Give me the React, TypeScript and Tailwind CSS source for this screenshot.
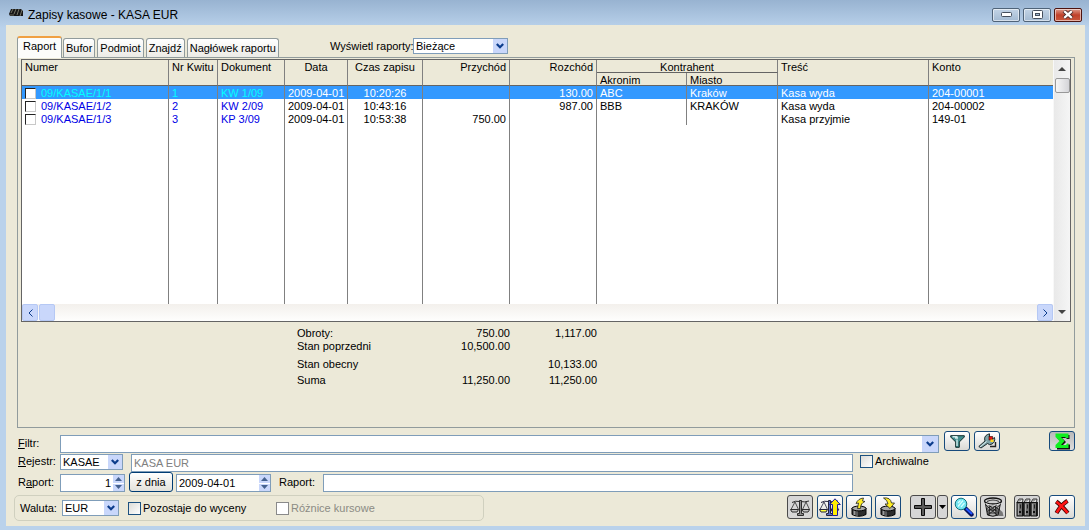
import React from "react";
import type { ReactNode } from "react";

type Entry = {
  numer: string;
  kwit: string;
  dokument: string;
  data: string;
  czas: string;
  przychod: string;
  rozchod: string;
  akronim: string;
  miasto: string;
  tresc: string;
  konto: string;
};

const entries: Entry[] = [
  { numer: "09/KASAE/1/1", kwit: "1", dokument: "KW 1/09", data: "2009-04-01", czas: "10:20:26", przychod: "", rozchod: "130.00", akronim: "ABC", miasto: "Kraków", tresc: "Kasa wyda", konto: "204-00001" },
  { numer: "09/KASAE/1/2", kwit: "2", dokument: "KW 2/09", data: "2009-04-01", czas: "10:43:16", przychod: "", rozchod: "987.00", akronim: "BBB", miasto: "KRAKÓW", tresc: "Kasa wyda", konto: "204-00002" },
  { numer: "09/KASAE/1/3", kwit: "3", dokument: "KP 3/09", data: "2009-04-01", czas: "10:53:38", przychod: "750.00", rozchod: "", akronim: "", miasto: "", tresc: "Kasa przyjmie", konto: "149-01" },
];

const tabs = ["Bufor", "Podmiot", "Znajdź", "Nagłówek raportu"];

function Chevron() {
  return (
    <svg width="8" height="6" viewBox="0 0 8 6" aria-hidden="true">
      <path d="M0.8 1 L4 4.2 L7.2 1" fill="none" stroke="#0b3c8c" strokeWidth="2.2" />
    </svg>
  );
}

function Combo({ id, label, value, className, arrow = "w-3.5" }: { id: string; label?: string; value: string; className: string; arrow?: string }) {
  return (
    <span className={`grid border border-[#7f9db9] bg-white ${className}`}>
      <select id={id} aria-label={label} className="col-start-1 row-start-1 min-w-0 appearance-none bg-white pl-0.5 leading-[13px] outline-none">
        <option>{value}</option>
      </select>
      <span className={`pointer-events-none col-start-1 row-start-1 flex items-center justify-center justify-self-end bg-[#c9d7fb] ${arrow}`}>
        <Chevron />
      </span>
    </span>
  );
}

function Spinner({ id, label, value, className, align }: { id: string; label?: string; value: string; className: string; align: string }) {
  return (
    <span className={`flex h-[18px] border border-[#7f9db9] bg-white ${className}`}>
      <input id={id} aria-label={label} defaultValue={value} className={`w-full min-w-0 flex-1 px-0.5 outline-none ${align}`} />
      <span className="flex w-[11px] flex-col gap-px">
        <button aria-label="Zwiększ" className="flex flex-1 items-center justify-center bg-[#c9d7fb]">
          <svg width="7" height="4" viewBox="0 0 7 4"><path d="M0 4L3.5 0L7 4Z" fill="#44618f" /></svg>
        </button>
        <button aria-label="Zmniejsz" className="flex flex-1 items-center justify-center bg-[#c9d7fb]">
          <svg width="7" height="4" viewBox="0 0 7 4"><path d="M0 0L3.5 4L7 0Z" fill="#44618f" /></svg>
        </button>
      </span>
    </span>
  );
}

function ToolButton({ label, look = "normal", size, children }: { label: string; look?: "normal" | "off" | "pressed"; size: string; children: ReactNode }) {
  const looks = {
    normal: "border-[#174a7c] bg-linear-to-b from-white to-[#dad9d5]",
    off: "border-[#4b4b4b] bg-[#d6d6d6]",
    pressed: "border-[#174a7c] bg-linear-to-b from-[#b9b9b9] to-[#dedede]",
  };
  return (
    <button aria-label={label} className={`flex shrink-0 items-center justify-center rounded-[3px] border ${looks[look]} ${size}`}>
      {children}
    </button>
  );
}

function ScalesShape({ pan, line, post }: { pan: string; line: string; post: string }) {
  return (
    <g fill="none" stroke={line} strokeWidth="1">
      <path d="M2 4.5Q5 2.500 10 3.500Q15 4.500 19 3" />
      <path d="M5 4L1 11.500M5 4L8.500 11.500M16 4L12.500 11.500M16 4L19.500 11.500" strokeWidth="0.8" />
      <path d="M0.500 11.500H8.500L7 14H2Z" fill={pan} />
      <path d="M12 11.500H19.700L18 14H13.500Z" fill={pan} />
      <path d="M9.500 2.500H11.500V15.500H13.500V17.500H7.500V15.500H9.500Z" fill={post} />
    </g>
  );
}

function Scales() {
  return <svg width="20" height="19" viewBox="0 0 20 19"><ScalesShape pan="#c4c4c4" line="#2b2b2b" post="#8d8d8d" /></svg>;
}

function ScalesUp() {
  return (
    <svg width="22" height="19" viewBox="0 0 22 19">
      <ScalesShape pan="#ffff3a" line="#22223c" post="#5a6fc4" />
      <path d="M16 0.8L21.300 6.500H18.500V17.500H13.500V6.500H10.700Z" fill="#ffef00" stroke="#1b1b9b" />
    </svg>
  );
}

function Drum({ out }: { out: boolean }) {
  return (
    <svg width="18" height="20" viewBox="0 0 18 20">
      <path d="M2 11V17.500Q9 21 16 17.500V11Z" fill="#2c2c2c" stroke="#000" />
      <path d="M4.500 13V18" stroke="#9a9a9a" strokeWidth="2" />
      <path d="M7 13.500V19" stroke="#6a6a6a" strokeWidth="1.500" />
      <ellipse cx="9" cy="11.500" rx="7" ry="2.400" fill="#a8a8a8" stroke="#000" />
      {out ? (
        <path d="M7.500 11.5L8.500 6L6 6.500Q8 1.500 13.500 1L12.500 4L15 4.500Q10.500 6 10.500 11.500Z" fill="#ffed22" stroke="#222" strokeWidth="0.8" />
      ) : (
        <path d="M4.500 1Q11.500 0 12.500 6H15.500L11 11.500L6 7H9Q8.500 3 4.500 1Z" fill="#ffed22" stroke="#222" strokeWidth="0.8" />
      )}
    </svg>
  );
}

function Plus() {
  return <svg width="18" height="18" viewBox="0 0 18 18"><path d="M7.500 0.500H10.500V7.500H17.500V10.500H10.500V17.500H7.500V10.500H0.500V7.500H7.500Z" fill="#5a5a5a" stroke="#0a0a0a" /></svg>;
}

function Magnifier() {
  return (
    <svg width="20" height="20" viewBox="0 0 20 20">
      <path d="M11.500 11.500L17.500 17.500" stroke="#061260" strokeWidth="4.400" strokeLinecap="round" />
      <path d="M12 11.500L18 17" stroke="#2457ff" strokeWidth="2" />
      <circle cx="7" cy="7" r="5.800" fill="#6fe4f0" stroke="#16717c" />
      <path d="M4 9.500L9 3.500M4 6L6.500 3.500M7 10L10.500 6" stroke="#d9ffff" strokeWidth="1.200" />
    </svg>
  );
}

function Bin() {
  return (
    <svg width="21" height="20" viewBox="0 0 21 20">
      <path d="M14 19H20.500L19.500 15L16 12Z" fill="#777" />
      <path d="M2 4L4.500 18Q10 20.500 15 18L18 4Z" fill="#b0b0b0" stroke="#111" />
      <path d="M3 8L14 18M5.500 8L16 16M9 8L17 13M17 8L5 18M14 8L4 15M10 8L3 12M7 8L6 18M12.500 8L13 18M4 13H16M4.500 16H15.500" stroke="#1c1c1c" strokeWidth="0.9" />
      <ellipse cx="10" cy="4" rx="8.500" ry="3" fill="#cfcfcf" stroke="#111" strokeWidth="1.300" />
      <path d="M4 4.500Q10 1.500 16 4.500" stroke="#333" strokeWidth="1.200" fill="none" />
      <path d="M2.500 6.500Q10 10 17.500 6.500" stroke="#eee" fill="none" />
    </svg>
  );
}

function Binders() {
  return (
    <svg width="22" height="19" viewBox="0 0 22 19">
      {[1, 8, 15].map((x) => (
        <g key={x}>
          <path d={`M${x} 4.500L${x + 2} 1H${x + 6}L${x + 5.5} 4.500Z`} fill="#dcdcdc" stroke="#111" strokeWidth="0.8" />
          <path d={`M${x + 2} 3.500L${x + 4} 1.500`} stroke="#333" strokeWidth="0.8" />
          <rect x={x} y="4.500" width="5.500" height="13.500" fill="#6e6e6e" stroke="#111" />
          <path d={`M${x + 1.5} 6V17`} stroke="#a5a5a5" />
          <path d={`M${x + 3.5} 6.500V10.500`} stroke="#222" />
          <rect x={x + 2} y="13" width="2" height="2" fill="#111" />
          <path d={`M${x + 6.5} 4V18`} stroke="#222" />
        </g>
      ))}
    </svg>
  );
}

function RedCross() {
  return (
    <svg width="16" height="16" viewBox="0 0 16 16">
      <path d="M2.200 2.500Q7 6 13.800 14M13.500 1.800Q7 6 2.500 14" fill="none" stroke="#3b0000" strokeWidth="4.200" />
      <path d="M2.400 2.700Q7 6 13.600 13.800M13.200 2.200Q7 6 2.700 13.600" fill="none" stroke="#ff1414" strokeWidth="2.600" />
    </svg>
  );
}

function Funnel() {
  return (
    <svg width="15" height="13" viewBox="0 0 15 13">
      <path d="M0.700 0.700H14.300V2L9.300 7V12.300H5.700V7L0.700 2Z" fill="#3f8c8c" stroke="#112b2b" />
      <path d="M2.500 1.800H7.500M5 3H8M7 4.500V11" stroke="#d5eeee" strokeWidth="1.400" fill="none" />
    </svg>
  );
}

function Wrench() {
  return (
    <svg width="19" height="16" viewBox="0 0 19 16">
      <path d="M0.800 13.500L7 8Q5.500 3.500 9.500 1.500L11.500 0.800V5L13.500 6.500L16.500 4.500Q17.500 9 14 11Q11.500 12.500 9.500 10.500L3 15Z" fill="#7fa3a8" stroke="#1c2a2c" />
      <path d="M2 14L8.500 8.500" stroke="#dceef0" />
      <rect x="11" y="3.500" width="3.500" height="3.500" fill="#e8170c" stroke="#300" strokeWidth="0.600" />
      <rect x="12.500" y="6.500" width="3" height="2.500" fill="#ffd91c" />
      <path d="M12 13.500H17.500V9" stroke="#222" strokeWidth="1.400" fill="none" />
    </svg>
  );
}

function Sigma() {
  return (
    <svg width="17" height="17" viewBox="0 0 17 17">
      <path d="M3 2H15.500V6H13L12 5H8L12 9L8 13H13L14 11.500H16V16.500H3V13L7 9L3 5Z" fill="#111" />
      <path d="M1.500 0.500H14.500V5H12L11 4H7L10.500 8L7 12H12L13 10.500H14.500V15H1.500V12L5.500 8L1.500 4Z" fill="#10ef20" />
    </svg>
  );
}

const frameButton = "flex h-3.5 items-center justify-center rounded-[2px] border shadow-[inset_0_0_0_1px_rgba(255,255,255,0.55)]";
const headCell = "border-r border-b border-b-[#646464] border-r-[#808080] px-[3px] align-top font-normal";
const tallHead = `${headCell} pt-px`;
const groupHead = `${headCell} pt-0.5 leading-[10px]`;
const cell = "border-r border-[#808080] px-[3px] pt-0.5 leading-[11px]";
const field = "h-[18px] min-w-0 border border-[#7f9db9] bg-white px-0.5 outline-none";
const scrollKey = "flex w-4 shrink-0 items-center justify-center rounded-[2px] border border-[#b5c8f4] bg-[#c9d7fb]";

export default function App() {
  return (
    <div className="flex min-h-screen flex-col bg-[#bad2eb] bg-linear-to-b from-[#98b3d1] to-[#bad2eb] to-[28px] pr-1 pb-1 pl-1.5 font-['Liberation_Sans',Arial,sans-serif] text-[11px] leading-[13px] text-black">
      <header className="flex h-[25px] shrink-0 items-center px-[3px]">
        <svg width="14" height="9" viewBox="0 0 14 9" aria-hidden="true">
          <path d="M0 6L2 1H12L14 3V8H1Z" fill="#171717" />
          <path d="M2 5L4 1M5 6L7 1M8 7L10 1M11 8L13 2" stroke="#8b8b78" strokeWidth="0.8" />
          <path d="M1 7H5" stroke="#6b6b5c" />
        </svg>
        <h1 className="ml-[5px] pt-1 text-[12px] leading-4">Zapisy kasowe - KASA EUR</h1>
        <div className="ml-auto flex gap-[3px] pt-1">
          <button aria-label="Minimalizuj" className={`${frameButton} w-7 border-[#4f6378] bg-linear-to-b from-[#c3d4e6] to-[#a3bad2]`}>
            <svg width="11" height="5" viewBox="0 0 11 5"><rect x="0.5" y="0.5" width="10" height="4" rx="1" fill="#fff" stroke="#444e5c" /></svg>
          </button>
          <button aria-label="Maksymalizuj" className={`${frameButton} w-7 border-[#4f6378] bg-linear-to-b from-[#c3d4e6] to-[#a3bad2]`}>
            <svg width="11" height="9" viewBox="0 0 11 9"><rect x="0.5" y="0.5" width="10" height="8" rx="1" fill="#fff" stroke="#444e5c" /><rect x="3.5" y="3.5" width="4" height="2" fill="#a3bad2" stroke="#444e5c" /></svg>
          </button>
          <button aria-label="Zamknij" className={`${frameButton} w-7 border-[#4d1410] bg-linear-to-b from-[#dc9a8c] via-[#c0402a] to-[#c9573c]`}>
            <svg width="12" height="9" viewBox="0 0 12 9"><path d="M2 1L10 8M10 1L2 8" stroke="#4a2a2a" strokeWidth="4" /><path d="M2.2 1.2L9.8 7.8M9.8 1.2L2.2 7.8" stroke="#fff" strokeWidth="2.2" /></svg>
          </button>
        </div>
      </header>

      <main className="flex flex-1 flex-col bg-[#ece9d8] pr-2.5 pb-[5px] pl-2">
        <div className="flex h-8 items-end pl-[3px]">
          <div role="tablist" className="flex items-end gap-0.5">
            <button role="tab" aria-selected="true" className="relative -mr-px -mb-px flex h-[22px] w-[45px] justify-center rounded-t-[3px] border-x border-t-2 border-x-[#919b9c] border-t-[#f0a042] bg-[#fcfcfa] pt-0.5">
              Raport
            </button>
            {tabs.map((tab) => (
              <button key={tab} role="tab" aria-selected="false" className="flex h-[19px] items-center rounded-t-[3px] border border-b-0 border-[#919b9c] bg-linear-to-b from-white to-[#ecebe6] px-0.5">
                {tab}
              </button>
            ))}
          </div>
          <div className="ml-auto flex w-[745px] items-center gap-1 pb-[3px]">
            <label htmlFor="wyswietl" className="w-[79px] whitespace-nowrap">Wyświetl raporty:</label>
            <Combo id="wyswietl" value="Bieżące" className="h-4 w-[95px]" />
          </div>
        </div>

        <section className="mb-[3px] ml-[3px] flex-1 border border-[#919b9c] px-[3px] pt-px">
          <div className="flex border border-[#646464] bg-white">
            <div className="min-w-0 flex-1">
              <table className="w-full table-fixed border-separate border-spacing-0 whitespace-nowrap">
                <colgroup>
                  <col className="w-[147px]" />
                  <col className="w-[49px]" />
                  <col className="w-[67px]" />
                  <col className="w-[63px]" />
                  <col className="w-[75px]" />
                  <col className="w-[87px]" />
                  <col className="w-[87px]" />
                  <col className="w-[90px]" />
                  <col className="w-[91px]" />
                  <col />
                  <col className="w-[124px]" />
                </colgroup>
                <thead className="bg-[#ece9d8]">
                  <tr className="h-[13px]">
                    <th rowSpan={2} className={`${tallHead} text-left`}>Numer</th>
                    <th rowSpan={2} className={`${tallHead} text-left`}>Nr Kwitu</th>
                    <th rowSpan={2} className={`${tallHead} text-left`}>Dokument</th>
                    <th rowSpan={2} className={`${tallHead} text-center`}>Data</th>
                    <th rowSpan={2} className={`${tallHead} text-center`}>Czas zapisu</th>
                    <th rowSpan={2} className={`${tallHead} text-right`}>Przychód</th>
                    <th rowSpan={2} className={`${tallHead} text-right`}>Rozchód</th>
                    <th colSpan={2} className={`${groupHead} text-center`}>Kontrahent</th>
                    <th rowSpan={2} className={`${tallHead} text-left`}>Treść</th>
                    <th rowSpan={2} className="border-b border-[#646464] px-[3px] pt-px text-left align-top font-normal">Konto</th>
                  </tr>
                  <tr className="h-[13px]">
                    <th className={`${groupHead} text-left`}>Akronim</th>
                    <th className={`${groupHead} text-left`}>Miasto</th>
                  </tr>
                </thead>
                <tbody>
                  {entries.map((e, i) => {
                    const key = i === 0 ? "text-[#00ffff]" : "text-[#0000e6]";
                    return (
                      <tr key={e.numer} className={`h-[13px] ${i === 0 ? "bg-[#3399ff] text-white" : ""}`}>
                        <td className={`${cell} ${key}`}>
                          <label className="flex items-center gap-[5px]">
                            <input type="checkbox" className="size-[11px] appearance-none border border-t-[#222] border-r-[#c8c8c8] border-b-[#c8c8c8] border-l-[#222] bg-white" />
                            {e.numer}
                          </label>
                        </td>
                        <td className={`${cell} ${key}`}>{e.kwit}</td>
                        <td className={`${cell} ${key}`}>{e.dokument}</td>
                        <td className={`${cell} text-center`}>{e.data}</td>
                        <td className={`${cell} text-center`}>{e.czas}</td>
                        <td className={`${cell} text-right`}>{e.przychod}</td>
                        <td className={`${cell} text-right`}>{e.rozchod}</td>
                        <td className={cell}>{e.akronim}</td>
                        <td className={cell}>{e.miasto}</td>
                        <td className={cell}>{e.tresc}</td>
                        <td className="px-[3px] pt-0.5 leading-[11px]">{e.konto}</td>
                      </tr>
                    );
                  })}
                  <tr className="h-[179px]">
                    <td className={cell} />
                    <td className={cell} />
                    <td className={cell} />
                    <td className={cell} />
                    <td className={cell} />
                    <td className={cell} />
                    <td className={cell} />
                    <td />
                    <td className={cell} />
                    <td className={cell} />
                    <td />
                  </tr>
                </tbody>
              </table>
              <div className="flex h-[17px] bg-linear-to-b from-[#f3f0ec] to-[#fefefd]">
                <button aria-label="W lewo" className={scrollKey}>
                  <svg width="5" height="8" viewBox="0 0 5 8"><path d="M4.5 0.5L1 4L4.5 7.5" fill="none" stroke="#0b3c8c" /></svg>
                </button>
                <span className="ml-px w-4 rounded-[2px] border border-[#b5c8f4] bg-[#c9d7fb]" />
                <button aria-label="W prawo" className={`${scrollKey} ml-auto`}>
                  <svg width="5" height="8" viewBox="0 0 5 8"><path d="M0.5 0.5L4 4L0.5 7.5" fill="none" stroke="#0b3c8c" /></svg>
                </button>
              </div>
            </div>
            <div className="flex w-[17px] flex-col items-center border-l border-[#f8f8f8] bg-linear-to-r from-[#e9e9e9] to-[#f5f5f5]">
              <button aria-label="W górę" className="flex h-[18px] w-full items-center justify-center">
                <svg width="8" height="4" viewBox="0 0 8 4"><path d="M0 4L4 0L8 4Z" fill="#444" /></svg>
              </button>
              <span className="h-[15px] w-[15px] rounded-[2px] border border-[#989898] bg-linear-to-r from-[#f6f6f6] to-[#d4d4d8]" />
              <button aria-label="W dół" className="mt-auto flex h-[18px] w-full items-center justify-center">
                <svg width="8" height="4" viewBox="0 0 8 4"><path d="M0 0L4 4L8 0Z" fill="#444" /></svg>
              </button>
            </div>
          </div>

          <table className="mt-[5px] ml-[276px] table-fixed border-separate border-spacing-0 text-right">
            <colgroup>
              <col className="w-[126px]" />
              <col className="w-[87px]" />
              <col className="w-[87px]" />
            </colgroup>
            <tbody>
              <tr><th className="text-left font-normal">Obroty:</th><td>750.00</td><td>1,117.00</td></tr>
              <tr><th className="text-left font-normal">Stan poprzedni</th><td>10,500.00</td><td /></tr>
              <tr><th className="pt-[5px] text-left font-normal">Stan obecny</th><td /><td className="pt-[5px]">10,133.00</td></tr>
              <tr><th className="pt-[3px] text-left font-normal">Suma</th><td className="pt-[3px]">11,250.00</td><td className="pt-[3px]">11,250.00</td></tr>
            </tbody>
          </table>
        </section>

        <div className="flex h-[22px] pl-1">
          <label htmlFor="filtr" className="w-[42px] self-center pt-0.5"><u>F</u>iltr:</label>
          <Combo id="filtr" value="" className="h-[18px] flex-1 self-end" arrow="w-4" />
          <div className="ml-[5px] flex gap-1">
            <ToolButton label="Filtruj" size="h-5 w-[26px]"><Funnel /></ToolButton>
            <ToolButton label="Konstruktor filtru" size="h-5 w-[26px]"><Wrench /></ToolButton>
          </div>
          <div className="ml-[49px]">
            <ToolButton label="Sumuj" look="pressed" size="h-5 w-[26px]"><Sigma /></ToolButton>
          </div>
        </div>

        <div className="mt-px flex h-[18px] pl-1">
          <label htmlFor="rejestr" className="w-[42px] pt-px"><u>R</u>ejestr:</label>
          <Combo id="rejestr" value="KASAE" className="h-4 w-[63px]" />
          <input aria-label="Nazwa rejestru" disabled defaultValue="KASA EUR" className={`${field} ml-2 flex-1 text-[#808080]`} />
          <label className="ml-[7px] flex w-[215px] items-center gap-0.5 pb-1">
            <input type="checkbox" className="size-[13px] appearance-none border border-[#1c5180] bg-linear-to-br from-[#dcdcd7] to-white" />
            Archiwalne
          </label>
        </div>

        <div className="flex h-5 items-end pr-[222px] pl-1">
          <label htmlFor="raport" className="w-[42px] self-center">R<u>a</u>port:</label>
          <Spinner id="raport" value="1" className="w-[65px]" align="text-right" />
          <button className="ml-1 h-5 w-11 rounded-[3px] border border-[#003c74] bg-linear-to-b from-white to-[#e3e1da]">z dnia</button>
          <Spinner id="data" label="Data raportu" value="2009-04-01" className="ml-[3px] w-[95px]" align="text-left" />
          <label htmlFor="opis" className="ml-2 w-11 self-center">Raport:</label>
          <input id="opis" className={`${field} flex-1`} />
        </div>

        <div className="mt-[3px] flex h-[26px] items-start">
          <div className="flex h-full w-[470px] items-center rounded-[5px] border border-[#d0d0bf] pl-[5px]">
            <label htmlFor="waluta" className="w-[42px]">Waluta:</label>
            <Combo id="waluta" value="EUR" className="h-4 w-[57px]" />
            <label className="ml-[9px] flex w-[148px] items-center gap-0.5">
              <input type="checkbox" className="size-[13px] appearance-none border border-[#1c5180] bg-linear-to-br from-[#dcdcd7] to-white" />
              Pozostaje do wyceny
            </label>
            <label className="flex items-center gap-0.5 text-[#8b8b84]">
              <input type="checkbox" disabled className="size-[13px] appearance-none border border-[#8a8a8a] bg-white" />
              Różnice kursowe
            </label>
          </div>
          <div className="ml-auto flex gap-[3px]">
            <div className="flex gap-1">
              <ToolButton label="Waga" look="off" size="h-6 w-[26px]"><Scales /></ToolButton>
              <ToolButton label="Rozlicz" size="h-6 w-[26px]"><ScalesUp /></ToolButton>
            </div>
            <ToolButton label="Wypłata" size="h-6 w-[26px]"><Drum out /></ToolButton>
            <ToolButton label="Wpłata" size="h-6 w-[26px]"><Drum out={false} /></ToolButton>
            <div className="ml-1.5 flex gap-px">
              <ToolButton label="Dodaj" look="off" size="h-6 w-[26px]"><Plus /></ToolButton>
              <ToolButton label="Więcej" look="off" size="h-6 w-[11px]">
                <svg width="7" height="4" viewBox="0 0 7 4" className="shrink-0"><path d="M0 0H7L3.5 4Z" fill="#000" /></svg>
              </ToolButton>
            </div>
            <ToolButton label="Podgląd" size="h-6 w-[26px]"><Magnifier /></ToolButton>
            <ToolButton label="Usuń" look="off" size="h-6 w-[26px]"><Bin /></ToolButton>
            <div className="ml-[5px] flex gap-[9px]">
              <ToolButton label="Księgi" look="off" size="h-6 w-[26px]"><Binders /></ToolButton>
              <ToolButton label="Zamknij okno" size="h-6 w-[26px]"><RedCross /></ToolButton>
            </div>
          </div>
        </div>
      </main>
    </div>
  );
}
